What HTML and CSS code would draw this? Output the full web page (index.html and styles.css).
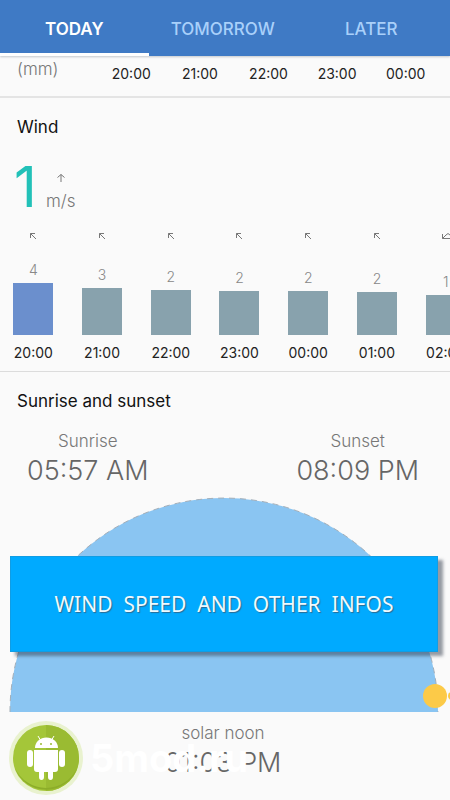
FILE: index.html
```html
<!DOCTYPE html>
<html lang="en">
<head>
<meta charset="utf-8">
<meta name="viewport" content="width=device-width, initial-scale=1">
<title>Weather</title>
<link rel="stylesheet" href="styles.css">
</head>
<body>
<nav class="tabs">
  <button class="tab tab-active" type="button">TODAY</button>
  <button class="tab" type="button">TOMORROW</button>
  <button class="tab" type="button">LATER</button>
</nav>
<main>
  <section class="rain">
    <span class="rain-unit">(mm)</span>
    <div class="rain-hours"><span>20:00</span><span>21:00</span><span>22:00</span><span>23:00</span><span>00:00</span></div>
  </section>
  <section class="wind">
    <h2>Wind</h2>
    <div class="current">
      <span class="speed">1</span>
      <div class="speed-side">
        <svg class="arrow-up" viewBox="0 0 10 10"><path d="M5 9V1.500M1.500 4.500L5 1.500L8.500 4.500"/></svg>
        <span>m/s</span>
      </div>
    </div>
    <div class="hours">
      <div class="hour now"><svg viewBox="0 0 8 8"><path d="M1.500 6V1.500H6M1.500 1.500L7 7"/></svg><div class="level"><span>4</span><i class="bar" style="height:52px"></i></div><b>20:00</b></div>
      <div class="hour"><svg viewBox="0 0 8 8"><path d="M1.500 6V1.500H6M1.500 1.500L7 7"/></svg><div class="level"><span>3</span><i class="bar" style="height:47px"></i></div><b>21:00</b></div>
      <div class="hour"><svg viewBox="0 0 8 8"><path d="M1.500 6V1.500H6M1.500 1.500L7 7"/></svg><div class="level"><span>2</span><i class="bar" style="height:45px"></i></div><b>22:00</b></div>
      <div class="hour"><svg viewBox="0 0 8 8"><path d="M1.500 6V1.500H6M1.500 1.500L7 7"/></svg><div class="level"><span>2</span><i class="bar" style="height:44px"></i></div><b>23:00</b></div>
      <div class="hour"><svg viewBox="0 0 8 8"><path d="M1.500 6V1.500H6M1.500 1.500L7 7"/></svg><div class="level"><span>2</span><i class="bar" style="height:44px"></i></div><b>00:00</b></div>
      <div class="hour"><svg viewBox="0 0 8 8"><path d="M1.500 6V1.500H6M1.500 1.500L7 7"/></svg><div class="level"><span>2</span><i class="bar" style="height:43px"></i></div><b>01:00</b></div>
      <div class="hour"><svg viewBox="0 0 8 8"><path d="M.5 2V6.500H5M.5 6.500L4 3Q6 0 8 3M5 6.500H8"/></svg><div class="level"><span>1</span><i class="bar" style="height:40px"></i></div><b>02:00</b></div>
    </div>
  </section>
  <section class="sun">
    <h2>Sunrise and sunset</h2>
    <div class="sun-times">
      <div class="sun-time"><span>Sunrise</span><strong>05:57 AM</strong></div>
      <div class="sun-time"><span>Sunset</span><strong>08:09 PM</strong></div>
    </div>
    <div class="arc">
      <svg class="arc-shape" viewBox="0 0 450 216">
        <path class="sky" d="M10 215A214 214 0 0 1 438 215Z"/>
        <path class="track" d="M10 215A214 214 0 0 1 438 215"/>
        <circle class="sun-dot" cx="435" cy="199" r="12"/>
        <circle class="sun-dot" cx="452" cy="199" r="4"/>
      </svg>
      <p class="banner">WIND  SPEED  AND  OTHER  INFOS</p>
    </div>
    <div class="noon">
      <span>solar noon</span>
      <strong>01:03 PM</strong>
      <div class="brand">
        <svg viewBox="0 0 76 76">
          <circle cx="38" cy="38" r="37" fill="#e9f2cf"/>
          <circle cx="38" cy="38" r="33" fill="#a4c639"/>
          <path d="M38 5A33 33 0 0 1 38 71Z" fill="#9abb32"/>
          <path d="M7 48A33 33 0 0 0 69 48A34 34 0 0 1 7 48Z" fill="#8cad29"/>
          <g fill="#fff">
            <path d="M27 28A11 10 0 0 1 50 28Z"/>
            <path d="M26 30H50V49Q50 52 47 52H45V57Q45 60 42.500 60T40 57V52H36V57Q36 60 33.500 60T31 57V52H29Q26 52 26 49Z"/>
            <rect x="19" y="30" width="6" height="17" rx="3"/>
            <rect x="51" y="30" width="6" height="17" rx="3"/>
          </g>
          <path d="M30 16L33 21M46 16L43 21" stroke="#fff" fill="none"/>
          <circle cx="33" cy="24" r="1" fill="#9abb32"/><circle cx="43" cy="24" r="1" fill="#9abb32"/>
        </svg>
        <span>5mod.ru</span>
      </div>
    </div>
  </section>
</main>
</body>
</html>
```
FILE: styles.css
```css
* { box-sizing: border-box; }
body {
  margin: 0;
  background: #fafafa;
  color: #222;
  font-family: Inter, "Liberation Sans", sans-serif;
  font-size: 14px;
  overflow-x: hidden;
}
.tabs {
  display: grid;
  grid-template-columns: repeat(3, 33%);
  background: #3f7ac5;
  box-shadow: 0 1px 2px #c4c8cc;
}
.tab {
  height: 56px;
  padding: 4px 0 0;
  border: 0;
  border-bottom: 3px solid transparent;
  background: none;
  color: #a9d0fa;
  font: 500 17px/20px Inter, sans-serif;
}
.tab-active { color: #fff; border-bottom-color: #fff; font-weight: 600; }
.rain {
  display: flex;
  height: 42px;
  padding-right: 10px;
  border-bottom: 2px solid #e4e4e4;
}
.rain-unit {
  width: 97px;
  padding: 3px 0 0 17px;
  color: #777;
  font-size: 17px;
  font-weight: 300;
  line-height: 20px;
}
.rain-hours {
  flex: 1;
  display: grid;
  grid-template-columns: repeat(5, 1fr);
  padding-top: 8px;
  line-height: 20px;
  text-align: center;
}
.wind { border-bottom: 1px solid #dcdcdc; overflow: hidden; }
h2 {
  margin: 0;
  padding: 19px 17px 0;
  color: #111;
  font-size: 17px;
  font-weight: 400;
  line-height: 20px;
}
.current {
  display: flex;
  align-items: flex-end;
  gap: 8px;
  height: 78px;
  padding-left: 14px;
}
.speed {
  width: 24px;
  color: #22c1b8;
  font-size: 56px;
  font-weight: 400;
  line-height: 56px;
}
.speed-side {
  display: flex;
  flex-direction: column;
  align-items: center;
  gap: 8px;
  padding-bottom: 4px;
  color: #777;
  font-size: 17px;
  font-weight: 300;
  line-height: 20px;
}
svg { display: block; }
.arrow-up { width: 10px; height: 10px; }
.arrow-up path, .hour path { fill: none; stroke: #777; stroke-width: 1; }
.hours {
  display: grid;
  grid-template-columns: repeat(7, 1fr);
  width: calc(100% + 31px);
  margin: 17px 0 0 -1px;
}
.hour { display: flex; flex-direction: column; align-items: center; }
.hour svg { width: 8px; height: 8px; overflow: visible; }
.level {
  display: flex;
  flex-direction: column;
  justify-content: flex-end;
  align-items: center;
  height: 95px;
  color: #888;
  font-weight: 300;
  line-height: 20px;
}
.level span { padding-bottom: 3px; }
.bar { display: block; width: 40px; background: #88a2ad; }
.now .bar { background: #6b8fcd; }
.hour b { padding: 8px 0; font-weight: 400; line-height: 20px; }
.sun-times { display: flex; justify-content: space-between; padding: 20px 31px 0 27px; }
.sun-time, .noon { display: flex; flex-direction: column; align-items: center; }
.sun-time span, .noon > span { color: #777; font-size: 17px; font-weight: 300; line-height: 20px; }
.sun-time strong, .noon strong { color: #666; font-size: 27px; font-weight: 300; line-height: 40px; }
.arc { position: relative; margin-top: 6px; }
.arc-shape { width: 100%; }
.sky { fill: #8ac5f2; }
.track { fill: none; stroke: #a3aeb8; stroke-width: 1; stroke-dasharray: 6 5; }
.sun-dot { fill: #fcca48; }
.banner {
  position: absolute;
  left: 10px;
  right: 12px;
  top: 59px;
  margin: 0;
  background: #00aaff;
  border: 1px solid #109de4;
  box-shadow: 5px 4px 3px rgba(50, 60, 75, .5);
  color: #eefaff;
  font-family: "Noto Sans", sans-serif;
  font-size: 21px;
  line-height: 94px;
  text-align: center;
  text-shadow: 1px 1px 1px #2a6c94;
  white-space: pre;
}
.noon { position: relative; padding: 10px 4px 17px 0; }
.brand {
  position: absolute;
  left: 8px;
  top: 7px;
  display: flex;
  align-items: center;
  gap: 6px;
  color: #fff;
  font-size: 38px;
  font-weight: 700;
}
.brand svg { width: 76px; height: 76px; }
```
